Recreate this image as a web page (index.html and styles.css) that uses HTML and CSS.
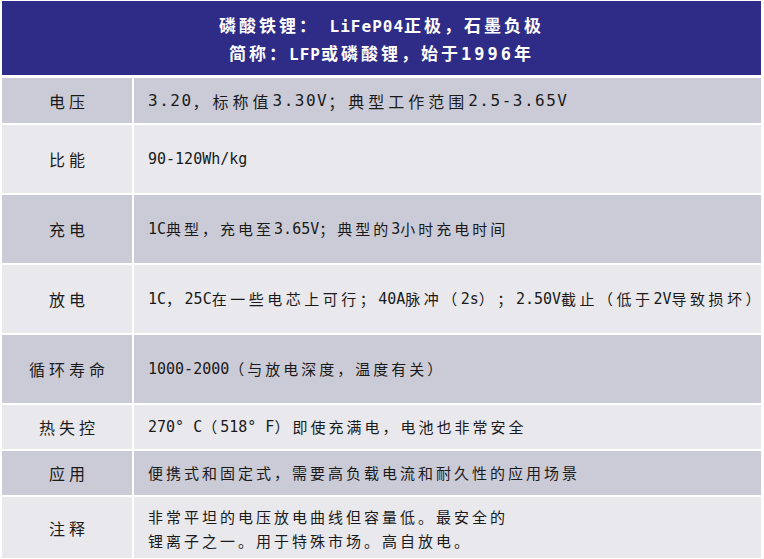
FILE: index.html
```html
<!DOCTYPE html>
<html lang="zh-CN">
<head>
<meta charset="utf-8">
<title>磷酸铁锂</title>
<link rel="stylesheet" href="styles.css">
</head>
<body>
<div class="table">
  <div class="head">
    <div class="head-line">磷酸铁锂：<span class="hm"> LiFeP04</span>正极，石墨负极</div>
    <div class="head-line">简称：<span class="hm">LFP</span>或磷酸锂，始于<span class="hm wide">1996</span>年</div>
  </div>

  <div class="label dark r1">电压</div>
  <div class="value dark r1 big"><span class="m">3.20</span>，标称值<span class="m">3.30V</span>；典型工作范围<span class="m">2.5-3.65V</span></div>

  <div class="label light r2">比能</div>
  <div class="value light r2"><span class="m">90-120Wh/kg</span></div>

  <div class="label dark r2">充电</div>
  <div class="value dark r2"><span class="m">1C</span>典型，充电至<span class="m">3.65V</span>；典型的<span class="m">3</span>小时充电时间</div>

  <div class="label light r2">放电</div>
  <div class="value light r2 tight"><span class="m">1C</span>，<span class="m">25C</span>在一些电芯上可行；<span class="m">40A</span>脉冲（<span class="m">2s</span>）；<span class="m">2.50V</span>截止（低于<span class="m">2V</span>导致损坏）</div>

  <div class="label dark r2">循环寿命</div>
  <div class="value dark r2"><span class="m">1000-2000</span>（与放电深度，温度有关）</div>

  <div class="label light r3">热失控</div>
  <div class="value light r3"><span class="m">270° C</span>（<span class="m">518° F</span>）即使充满电，电池也非常安全</div>

  <div class="label dark r3">应用</div>
  <div class="value dark r3">便携式和固定式，需要高负载电流和耐久性的应用场景</div>

  <div class="label light r4">注释</div>
  <div class="value light r4">非常平坦的电压放电曲线但容量低。最安全的<br>锂离子之一。用于特殊市场。高自放电。</div>
</div>
</body>
</html>
```
FILE: styles.css
```css
html, body {
  margin: 0;
  padding: 0;
  background: #ffffff;
}

body {
  font-family: "Noto Sans CJK SC", "Liberation Sans", sans-serif;
  color: #1a1a1a;
  text-spacing-trim: space-all;
}

.table {
  display: grid;
  grid-template-columns: 130px 627px;
  column-gap: 2px;
  row-gap: 2px;
  width: 759px;
  margin: 1px 0 0 2px;
}

.head {
  grid-column: 1 / 3;
  height: 74px;
  margin-bottom: 1px;
  background: #2e2c87;
  color: #ffffff;
  display: flex;
  flex-direction: column;
  justify-content: center;
  align-items: center;
  padding-top: 3px;
  box-sizing: border-box;
  font-size: 17px;
  font-weight: bold;
  letter-spacing: 3px;
}

.head-line {
  line-height: 26px;
  white-space: nowrap;
}

.hm {
  font-family: "DejaVu Sans Mono", monospace;
  font-size: 16px;
  letter-spacing: 1px;
  font-weight: bold;
}

.hm.wide {
  font-size: 17px;
  letter-spacing: 3px;
}

.dark {
  background: #cbcbd7;
}

.light {
  background: #e8e8ed;
}

.r1 { height: 45px; }
.r2 { height: 68px; }
.r3 { height: 44px; }
.r4 { height: 61px; }

.label {
  display: flex;
  align-items: center;
  justify-content: center;
  padding-left: 4px;
  box-sizing: border-box;
  font-size: 16px;
  letter-spacing: 4px;
}

.value {
  display: flex;
  align-items: center;
  padding-left: 14px;
  box-sizing: border-box;
  font-size: 15px;
  letter-spacing: 3px;
  line-height: 24px;
  white-space: nowrap;
}

.value.r4 {
  display: block;
  padding-top: 8px;
}

.m {
  font-family: "DejaVu Sans Mono", monospace;
  font-size: 15px;
  letter-spacing: 0;
}

.value.big {
  font-size: 16px;
  letter-spacing: 4px;
}

.value.big .m {
  font-size: 16px;
  letter-spacing: 1.5px;
}

.value.tight {
  letter-spacing: 3.5px;
}
```
